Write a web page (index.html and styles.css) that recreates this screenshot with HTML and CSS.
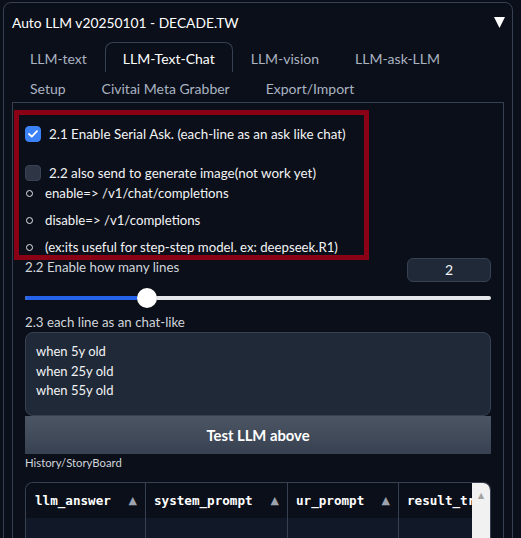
FILE: index.html
```html
<!DOCTYPE html>
<html>
<head>
<meta charset="utf-8">
<link rel="stylesheet" href="styles.css">
</head>
<body>
<div class="block">
  <div class="block-head">
    <span class="title">Auto LLM v20250101 - DECADE.TW</span>
    <svg class="caret" width="11" height="11" viewBox="0 0 11 11"><polygon points="0,0 11,0 5.5,11" fill="#ffffff"/></svg>
  </div>
  <div class="tabs">
    <div class="tab">LLM-text</div>
    <div class="tab selected">LLM-Text-Chat</div>
    <div class="tab">LLM-vision</div>
    <div class="tab">LLM-ask-LLM</div>
    <div class="tab">Setup</div>
    <div class="tab">Civitai Meta Grabber</div>
    <div class="tab">Export/Import</div>
  </div>
  <div class="panel">
    <div class="annot"></div>
    <label class="check-row">
      <span class="box checked">
        <svg width="10" height="8" viewBox="0 0 10 8"><polyline points="1,4 3.8,6.6 9,1.2" fill="none" stroke="#ffffff" stroke-width="1.8" stroke-linecap="round" stroke-linejoin="round"/></svg>
      </span>
      <span class="check-text">2.1 Enable Serial Ask. (each-line as an ask like chat)</span>
    </label>
    <label class="check-row second">
      <span class="box"></span>
      <span class="check-text">2.2 also send to generate image(not work yet)</span>
    </label>
    <ul class="notes">
      <li>enable=&gt; /v1/chat/completions</li>
      <li>disable=&gt; /v1/completions</li>
      <li>(ex:its useful for step-step model. ex: deepseek.R1)</li>
    </ul>
    <div class="num-row">
      <span class="field-label">2.2 Enable how many lines</span>
      <div class="num-box">2</div>
    </div>
    <div class="slider">
      <div class="track"><div class="fill" style="width: 26%"></div></div>
      <div class="thumb"></div>
    </div>
    <div class="field-label area-label">2.3 each line as an chat-like</div>
    <div class="textarea">when 5y old<br>when 25y old<br>when 55y old</div>
    <button class="btn">Test LLM above</button>
    <div class="small-label">History/StoryBoard</div>
    <div class="table">
      <div class="thead">
        <div class="th c1"><span>llm_answer</span><i>▲</i></div>
        <div class="th c2"><span>system_prompt</span><i>▲</i></div>
        <div class="th c3"><span>ur_prompt</span><i>▲</i></div>
        <div class="th c4"><span>result_translate</span></div>
      </div>
      <div class="tbody">
        <div class="td c1"></div>
        <div class="td c2"></div>
        <div class="td c3"></div>
        <div class="td c4"></div>
      </div>
      <div class="scrollbar"><i>▲</i></div>
    </div>
  </div>
</div>
</body>
</html>
```
FILE: styles.css
```css
* { box-sizing: border-box; }
html, body {
  margin: 0;
  padding: 0;
  background: #0b0f19;
  height: 100%;
  overflow: hidden;
}
body {
  font-family: "Lato", "Open Sans", sans-serif;
  color: #e5e7eb;
}
.block {
  margin: 2px 8px 0 3px;
  border: 1px solid #374151;
  border-radius: 8px;
  padding: 0 8px;
  height: 560px;
}
.block-head {
  height: 39px;
  display: flex;
  align-items: center;
  justify-content: space-between;
}
.title {
  font-size: 13.8px;
  color: #ffffff;
}
.caret {
  margin-right: -1px;
}
.tabs {
  display: flex;
  flex-wrap: wrap;
}
.tab {
  height: 30px;
  padding: 2px 17px 0;
  font-size: 14px;
  line-height: 28px;
  color: #aab3c2;
  border: 1px solid transparent;
  border-bottom: none;
  white-space: nowrap;
}
.tab.selected {
  color: #ffffff;
  border-color: #374151;
  border-radius: 8px 8px 0 0;
}
.panel {
  position: relative;
  border: 1px solid #374151;
  border-bottom: none;
  padding: 21px 12px 0;
  height: 460px;
}
.annot {
  position: absolute;
  left: 1px;
  top: 7px;
  width: 355px;
  height: 150px;
  border: 5px solid #8a0015;
  pointer-events: none;
}
.check-row {
  display: flex;
  align-items: center;
  height: 20px;
  gap: 8px;
}
.check-row.second {
  margin-top: 19px;
}
.box {
  width: 16px;
  height: 16px;
  border-radius: 4px;
  background: #2e3646;
  border: 1px solid #3a4354;
  display: flex;
  align-items: center;
  justify-content: center;
}
.box.checked {
  background: #3b82f6;
  border-color: #3b82f6;
}
.check-text {
  font-size: 13.4px;
  color: #f3f4f6;
}
.notes {
  list-style: none;
  margin: 0;
  padding: 0;
}
.notes li {
  position: relative;
  height: 20px;
  line-height: 20px;
  font-size: 13.2px;
  padding-left: 20px;
  color: #f3f4f6;
}
.notes li + li {
  margin-top: 7px;
}
.notes li::before {
  content: "";
  position: absolute;
  left: 1px;
  top: 7px;
  width: 5px;
  height: 5px;
  border: 1px solid #e5e7eb;
  border-radius: 50%;
}
.num-row {
  display: flex;
  justify-content: space-between;
  align-items: flex-start;
  height: 24px;
  margin-top: 1px;
}
.field-label {
  font-size: 13.3px;
  line-height: 18px;
  color: #d1d5db;
}
.num-box {
  width: 84px;
  height: 24px;
  border: 1px solid #374151;
  background: #1f2937;
  border-radius: 6px;
  text-align: center;
  font-size: 14px;
  line-height: 22px;
  color: #f3f4f6;
}
.slider {
  position: relative;
  height: 20px;
  margin-top: 6px;
  display: flex;
  align-items: center;
}
.track {
  width: 100%;
  height: 4px;
  border-radius: 2px;
  background: #e5e7eb;
  overflow: hidden;
}
.fill {
  height: 100%;
  background: #2563eb;
}
.thumb {
  position: absolute;
  left: 112px;
  top: 0;
  width: 20px;
  height: 20px;
  border-radius: 50%;
  background: #ffffff;
  box-shadow: 0 0 1px rgba(0,0,0,0.5);
}
.area-label {
  margin-top: 5px;
}
.textarea {
  margin-top: 1px;
  height: 84px;
  border: 1px solid #374151;
  background: #1f2937;
  border-radius: 8px;
  padding: 9px 10px;
  font-size: 13px;
  line-height: 19.5px;
  color: #f3f4f6;
}
.btn {
  display: block;
  width: 100%;
  height: 38px;
  margin-top: 0;
  border: none;
  background: linear-gradient(to bottom, #4b5563, #374151);
  color: #ffffff;
  font-family: inherit;
  font-size: 14.8px;
  font-weight: 700;
}
.small-label {
  font-size: 11.3px;
  line-height: 16px;
  margin-top: 1px;
  color: #d1d5db;
}
.table {
  position: relative;
  margin-top: 11px;
  border: 1px solid #374151;
  border-bottom: none;
  border-radius: 8px 8px 0 0;
  overflow: hidden;
  height: 80px;
}
.thead, .tbody {
  display: grid;
  grid-template-columns: 120px 142px 111px 100px;
}
.thead {
  height: 35px;
  background: #0b0f19;
}
.tbody {
  height: 60px;
  background: #111827;
}
.th {
  display: flex;
  align-items: center;
  justify-content: space-between;
  padding: 0 8px 0 9px;
  font-family: "DejaVu Sans Mono", "Liberation Mono", monospace;
  font-size: 12.6px;
  font-weight: 700;
  color: #ffffff;
  white-space: nowrap;
  overflow: hidden;
}
.th i {
  font-style: normal;
  font-family: "DejaVu Sans", sans-serif;
  font-size: 11px;
  color: #9ca3af;
}
.c1, .c2, .c3 {
  border-right: 1px solid #374151;
}
.th.c2, .th.c3, .th.c4 { padding-left: 8px; }
.scrollbar {
  position: absolute;
  right: 0;
  top: 0;
  width: 18px;
  height: 100%;
  background: #f1f1f1;
  text-align: center;
  line-height: 14px;
  padding-top: 2px;
}
.scrollbar i {
  font-style: normal;
  font-family: "DejaVu Sans", sans-serif;
  color: #a3a3a3;
  font-size: 8px;
}
```
